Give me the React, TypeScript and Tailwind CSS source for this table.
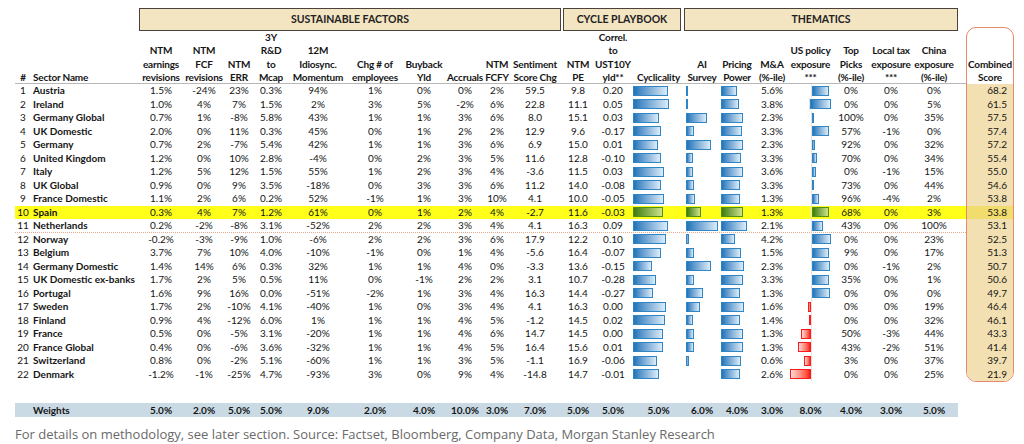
import React from "react"

type Row = {
  n: number
  name: string
  v: string[]
  cyc: number
  ai: number
  pp: number
  ma: string
  us: number
  t: string[]
  s: string
}

const COLS =
  "grid grid-cols-[16px_110px_40px_46px_24px_40px_54px_60px_38px_44px_20px_56px_30px_40px_51px_36px_34px_36px_41px_40px_40px_46px_9px]"

const rows: Row[] = [
  { n: 1, name: "Austria", v: ["1.5%", "-24%", "23%", "0.3%", "94%", "1%", "0%", "0%", "2%", "59.5", "9.8", "0.20"], cyc: 35, ai: 2, pp: 16, ma: "5.6%", us: 17, t: ["0%", "0%", "0%"], s: "68.2" },
  { n: 2, name: "Ireland", v: ["1.0%", "4%", "7%", "1.5%", "2%", "3%", "5%", "-2%", "6%", "22.8", "11.1", "0.05"], cyc: 36, ai: 2, pp: 18, ma: "3.8%", us: 21, t: ["0%", "0%", "5%"], s: "61.5" },
  { n: 3, name: "Germany Global", v: ["0.7%", "1%", "-8%", "5.8%", "43%", "1%", "1%", "3%", "6%", "8.0", "15.1", "0.03"], cyc: 26, ai: 21, pp: 22, ma: "2.3%", us: 2, t: ["100%", "0%", "35%"], s: "57.5" },
  { n: 4, name: "UK Domestic", v: ["2.0%", "0%", "11%", "0.3%", "45%", "0%", "1%", "2%", "2%", "12.9", "9.6", "-0.17"], cyc: 28, ai: 8, pp: 21, ma: "3.3%", us: 17, t: ["57%", "-1%", "0%"], s: "57.4" },
  { n: 5, name: "Germany", v: ["0.7%", "2%", "-7%", "5.4%", "42%", "1%", "1%", "3%", "6%", "6.9", "15.0", "0.01"], cyc: 25, ai: 25, pp: 22, ma: "2.3%", us: 3, t: ["92%", "0%", "32%"], s: "57.2" },
  { n: 6, name: "United Kingdom", v: ["1.2%", "0%", "10%", "2.8%", "-4%", "0%", "2%", "3%", "5%", "11.6", "12.8", "-0.10"], cyc: 28, ai: 7, pp: 20, ma: "3.3%", us: 5, t: ["70%", "0%", "34%"], s: "55.4" },
  { n: 7, name: "Italy", v: ["1.2%", "5%", "12%", "1.5%", "55%", "1%", "2%", "3%", "4%", "-3.6", "11.5", "0.03"], cyc: 31, ai: 7, pp: 22, ma: "3.6%", us: 4, t: ["0%", "-1%", "15%"], s: "55.0" },
  { n: 8, name: "UK Global", v: ["0.9%", "0%", "9%", "3.5%", "-18%", "0%", "3%", "3%", "6%", "11.2", "14.0", "-0.08"], cyc: 28, ai: 8, pp: 19, ma: "3.3%", us: 2, t: ["73%", "0%", "44%"], s: "54.6" },
  { n: 9, name: "France Domestic", v: ["1.1%", "2%", "6%", "0.2%", "52%", "-1%", "1%", "3%", "10%", "4.1", "10.0", "-0.05"], cyc: 31, ai: 9, pp: 19, ma: "1.3%", us: 7, t: ["96%", "-4%", "2%"], s: "53.8" },
  { n: 10, name: "Spain", v: ["0.3%", "4%", "7%", "1.2%", "61%", "0%", "1%", "2%", "4%", "-2.7", "11.6", "-0.03"], cyc: 30, ai: 15, pp: 22, ma: "1.3%", us: 17, t: ["68%", "0%", "3%"], s: "53.8" },
  { n: 11, name: "Netherlands", v: ["0.2%", "-2%", "-8%", "3.1%", "-52%", "2%", "2%", "3%", "4%", "4.1", "16.3", "0.09"], cyc: 35, ai: 32, pp: 26, ma: "2.1%", us: 11, t: ["43%", "0%", "100%"], s: "53.1" },
  { n: 12, name: "Norway", v: ["-0.2%", "-3%", "-9%", "1.0%", "-6%", "2%", "2%", "3%", "6%", "17.9", "12.2", "0.10"], cyc: 33, ai: 3, pp: 14, ma: "4.2%", us: 19, t: ["0%", "0%", "23%"], s: "52.5" },
  { n: 13, name: "Belgium", v: ["3.7%", "7%", "10%", "4.0%", "-10%", "-1%", "0%", "1%", "4%", "-5.6", "16.4", "-0.07"], cyc: 28, ai: 8, pp: 20, ma: "1.5%", us: 17, t: ["9%", "0%", "17%"], s: "51.3" },
  { n: 14, name: "Germany Domestic", v: ["1.4%", "14%", "6%", "0.3%", "32%", "1%", "1%", "4%", "0%", "-3.3", "13.6", "-0.15"], cyc: 19, ai: 25, pp: 23, ma: "2.3%", us: 18, t: ["0%", "-1%", "2%"], s: "50.7" },
  { n: 15, name: "UK Domestic ex-banks", v: ["1.7%", "2%", "5%", "0.5%", "11%", "0%", "-1%", "2%", "2%", "3.1", "10.7", "-0.28"], cyc: 23, ai: 8, pp: 22, ma: "3.3%", us: 17, t: ["35%", "0%", "1%"], s: "50.6" },
  { n: 16, name: "Portugal", v: ["1.6%", "9%", "16%", "0.0%", "-51%", "-2%", "1%", "3%", "4%", "16.3", "14.4", "-0.27"], cyc: 20, ai: 17, pp: 19, ma: "1.3%", us: 18, t: ["0%", "0%", "0%"], s: "49.7" },
  { n: 17, name: "Sweden", v: ["1.7%", "2%", "-10%", "4.1%", "-40%", "1%", "0%", "3%", "4%", "4.1", "16.3", "0.00"], cyc: 33, ai: 14, pp: 23, ma: "1.6%", us: -3, t: ["0%", "0%", "19%"], s: "46.4" },
  { n: 18, name: "Finland", v: ["0.9%", "4%", "-12%", "6.0%", "1%", "1%", "1%", "4%", "5%", "-1.2", "14.5", "0.02"], cyc: 32, ai: 7, pp: 19, ma: "1.4%", us: -2, t: ["0%", "0%", "32%"], s: "46.1" },
  { n: 19, name: "France", v: ["0.5%", "0%", "-5%", "3.1%", "-20%", "1%", "1%", "4%", "6%", "14.7", "14.5", "0.00"], cyc: 30, ai: 8, pp: 22, ma: "1.3%", us: -10, t: ["50%", "-3%", "44%"], s: "43.3" },
  { n: 20, name: "France Global", v: ["0.4%", "0%", "-6%", "3.6%", "-32%", "1%", "1%", "4%", "5%", "16.4", "15.6", "0.01"], cyc: 30, ai: 8, pp: 22, ma: "1.3%", us: -13, t: ["43%", "-2%", "51%"], s: "41.4" },
  { n: 21, name: "Switzerland", v: ["0.8%", "0%", "-2%", "5.1%", "-60%", "1%", "1%", "3%", "5%", "-1.1", "16.9", "-0.06"], cyc: 24, ai: 3, pp: 20, ma: "0.6%", us: -7, t: ["3%", "0%", "37%"], s: "39.7" },
  { n: 22, name: "Denmark", v: ["-1.2%", "-1%", "-25%", "4.7%", "-93%", "3%", "0%", "9%", "4%", "-14.8", "14.7", "-0.01"], cyc: 26, ai: 0, pp: 19, ma: "2.6%", us: -21, t: ["0%", "0%", "25%"], s: "21.9" },
]

const headers: string[][] = [
  ["NTM", "earnings", "revisions"],
  ["NTM", "FCF", "revisions"],
  ["NTM", "ERR"],
  ["3Y", "R&D", "to", "Mcap"],
  ["12M", "Idiosync.", "Momentum"],
  ["Chg # of", "employees"],
  ["Buyback", "Yld"],
  ["Accruals"],
  ["NTM", "FCFY"],
  ["Sentiment", "Score Chg"],
  ["NTM", "PE"],
  ["Correl.", "to", "UST10Y", "yld**"],
  ["Cyclicality"],
  ["AI", "Survey"],
  ["Pricing", "Power"],
  ["M&A", "(%-ile)"],
  ["US policy", "exposure", "***"],
  ["Top", "Picks", "(%-ile)"],
  ["Local tax", "exposure", "***"],
  ["China", "exposure", "(%-ile)"],
]

const weights = ["5.0%", "2.0%", "5.0%", "5.0%", "9.0%", "2.0%", "4.0%", "10.0%", "3.0%", "7.0%", "5.0%", "5.0%", "5.0%", "6.0%", "4.0%", "3.0%", "8.0%", "4.0%", "3.0%", "5.0%"]

function Bar({ w, green }: { w: number; green?: boolean }) {
  if (w <= 0) return null
  const cls = green
    ? "border-[#4f8f14] from-[#3d7d00] to-[#cfe38a]"
    : "border-[#2f86c6] from-[#1c74b8] to-[#dcecf8]"
  return <div className={`h-[10px] border bg-linear-to-r ${cls}`} style={{ width: w }} />
}

function NegBar({ w }: { w: number }) {
  if (w <= 0) return null
  return (
    <div
      className="h-[10px] border border-[#ff1a1a] bg-linear-to-l from-[#ff0000] to-[#ffd8d8]"
      style={{ width: w }}
    />
  )
}

function Cell({ children }: { children: React.ReactNode }) {
  return <div className="flex items-center justify-center whitespace-nowrap">{children}</div>
}

export default function App() {
  return (
    <div className="w-[1024px] h-[444px] overflow-hidden bg-white font-[Lato,sans-serif] text-[10px] text-[#151515]">
      <div className="flex pl-[15px]">
        {/* left table */}
        <div className="w-[951px]">
          {/* group headers */}
          <div className={`${COLS} mt-[8px] h-[23px] font-bold text-[10.5px] text-[#222]`}>
            <div className="col-span-2" />
            <div className="col-span-10 ml-[-2px] mr-[2px] flex items-center justify-center border border-[#4a423c] bg-[#f4e5c2]">
              SUSTAINABLE FACTORS
            </div>
            <div className="col-span-3 mr-[3px] flex items-center justify-center border border-[#4a423c] bg-[#f4e5c2]">
              CYCLE PLAYBOOK
            </div>
            <div className="col-span-7 mr-[-1px] flex items-center justify-center border border-[#4a423c] bg-[#f4e5c2]">
              THEMATICS
            </div>
          </div>

          {/* column headers */}
          <div className={`${COLS} h-[53px] border-b border-[#b8b8b8] font-bold leading-[13.25px] tracking-[-0.2px]`}>
            <div className="flex items-end justify-center">#</div>
            <div className="flex items-end pl-[2px]">Sector Name</div>
            {headers.map((h, i) => (
              <div key={i} className="flex flex-col items-center justify-end whitespace-nowrap text-center">
                {h.map((l) => (
                  <span key={l}>{l}</span>
                ))}
              </div>
            ))}
            <div />
          </div>

          {/* rows */}
          {rows.map((r) => {
            const spain = r.n === 10
            return (
              <div
                key={r.n}
                className={`${COLS} h-[13.5px] leading-[13.5px] ${spain ? "bg-[#ffff1a]" : ""} ${
                  r.n === 11 ? "border-b border-dotted border-[#eeaa90]" : ""
                }`}
              >
                <Cell>{r.n}</Cell>
                <div className="pl-[2px] font-bold whitespace-nowrap">{r.name}</div>
                {r.v.map((x, i) => (
                  <Cell key={i}>{x}</Cell>
                ))}
                <div className="flex items-center">
                  <Bar w={r.cyc} green={spain} />
                </div>
                <div className="flex items-center pl-[2px]">
                  <Bar w={r.ai} green={spain} />
                </div>
                <div className="flex items-center pl-[1px]">
                  <Bar w={r.pp} green={spain} />
                </div>
                <Cell>{r.ma}</Cell>
                <div className="flex">
                  <div className="flex w-[21px] items-center justify-end">
                    <NegBar w={-r.us} />
                  </div>
                  <div className="flex flex-1 items-center border-l border-[#e2e2e2]">
                    <Bar w={r.us} green={spain} />
                  </div>
                </div>
                {r.t.map((x, i) => (
                  <Cell key={i}>{x}</Cell>
                ))}
                <div />
              </div>
            )
          })}

          {/* weights */}
          <div className={`${COLS} mt-[22px] h-[14px] w-[943px] bg-[#c9dae4] font-bold leading-[14px]`}>
            <div />
            <div className="pl-[2px]">Weights</div>
            {weights.map((w, i) => (
              <Cell key={i}>{w}</Cell>
            ))}
          </div>
        </div>

        {/* combined score */}
        <div className="mt-[27px] h-[355px] w-[48px] overflow-hidden rounded-[10px] border border-[#e7896b]">
          <div className="flex h-[56px] flex-col items-center justify-end font-bold leading-[13.25px] tracking-[-0.2px]">
            <span>Combined</span>
            <span>Score</span>
          </div>
          <div className="bg-[#f3e0b2]">
            {rows.map((r) => (
              <div
                key={r.n}
                className={`h-[13.5px] pr-[6px] text-right leading-[13.5px] ${r.n === 10 ? "bg-[#f1dc6e]" : ""}`}
              >
                {r.s}
              </div>
            ))}
          </div>
        </div>
      </div>

      <p className="mt-[10px] pl-[15px] font-['Open_Sans',sans-serif] text-[13px] leading-[14px] text-[#6a6a6a]">
        For details on methodology, see later section. Source: Factset, Bloomberg, Company Data, Morgan Stanley Research
      </p>
    </div>
  )
}
